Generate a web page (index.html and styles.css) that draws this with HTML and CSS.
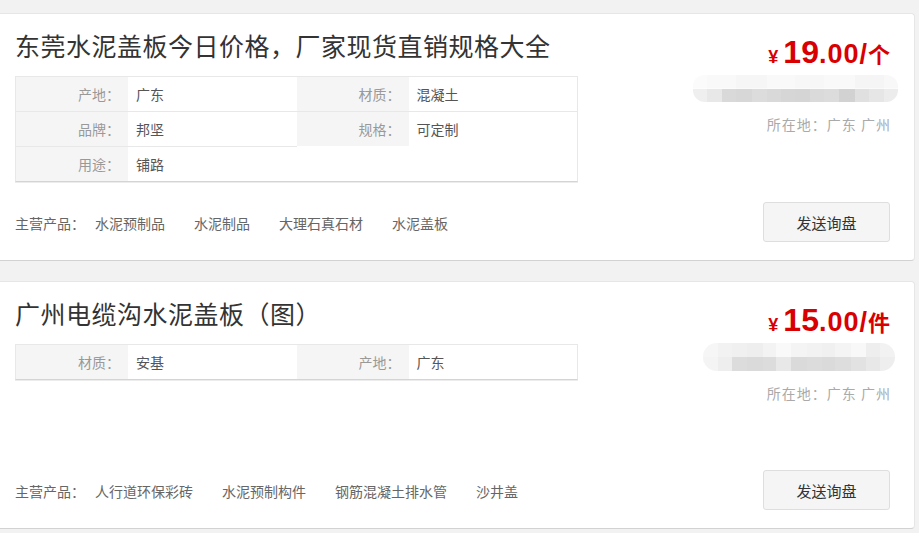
FILE: index.html
```html
<!DOCTYPE html>
<html lang="zh-CN">
<head>
<meta charset="utf-8">
<title>水泥盖板</title>
<link rel="stylesheet" href="styles.css">
</head>
<body>
<div class="list">
  <div class="card">
    <div class="main">
      <h2 class="title">东莞水泥盖板今日价格，厂家现货直销规格大全</h2>
      <ul class="attrs">
        <li><span class="k">产地：</span><span class="v">广东</span></li>
        <li><span class="k">材质：</span><span class="v">混凝土</span></li>
        <li><span class="k">品牌：</span><span class="v">邦坚</span></li>
        <li><span class="k">规格：</span><span class="v">可定制</span></li>
        <li><span class="k">用途：</span><span class="v">铺路</span></li>
      </ul>
      <div class="products"><span class="plabel">主营产品：</span><span class="pitem">水泥预制品</span><span class="pitem">水泥制品</span><span class="pitem">大理石真石材</span><span class="pitem">水泥盖板</span></div>
    </div>
    <div class="side">
      <div class="price"><span class="yen">¥</span><span class="int">19</span><span class="dec">.00/</span><span class="unit">个</span></div>
      <div class="blur blur-a"></div>
      <div class="loc">所在地：广东 广州</div>
      <button class="inquiry">发送询盘</button>
    </div>
  </div>

  <div class="card">
    <div class="main">
      <h2 class="title">广州电缆沟水泥盖板（图）</h2>
      <ul class="attrs">
        <li><span class="k">材质：</span><span class="v">安基</span></li>
        <li><span class="k">产地：</span><span class="v">广东</span></li>
      </ul>
      <div class="products"><span class="plabel">主营产品：</span><span class="pitem">人行道环保彩砖</span><span class="pitem">水泥预制构件</span><span class="pitem">钢筋混凝土排水管</span><span class="pitem">沙井盖</span></div>
    </div>
    <div class="side">
      <div class="price"><span class="yen">¥</span><span class="int">15</span><span class="dec">.00/</span><span class="unit">件</span></div>
      <div class="blur blur-b"></div>
      <div class="loc">所在地：广东 广州</div>
      <button class="inquiry">发送询盘</button>
    </div>
  </div>
</div>
</body>
</html>
```

FILE: styles.css
```css
html, body {
  margin: 0;
  padding: 0;
  background: #f2f2f2;
}
body {
  font-family: "Noto Sans CJK SC", "Liberation Sans", sans-serif;
  font-size: 14px;
  color: #555;
}
.list {
  padding-top: 13px;
  display: flex;
  flex-direction: column;
  gap: 20px;
  width: 915px;
}
.card {
  box-sizing: border-box;
  height: 248px;
  background: #fff;
  border: 1px solid #e6e6e6;
  border-left: 0;
  border-bottom: 1px solid #d2d2d2;
  border-radius: 0 4px 4px 0;
  display: flex;
  padding: 0 24px 0 15px;
}
.main {
  width: 563px;
  display: flex;
  flex-direction: column;
  padding: 13px 0 27px;
}
.title {
  margin: 0;
  font-size: 25px;
  line-height: 36px;
  font-weight: 400;
  color: #333;
  letter-spacing: 0.5px;
}
.attrs {
  list-style: none;
  margin: 13px 0 0;
  padding: 0;
  display: grid;
  grid-template-columns: 1fr 1fr;
  border: 1px solid #e8e8e8;
  border-bottom: 1px solid #d4d4d4;
  box-shadow: 0 1px 0 #ececec;
}
.attrs li {
  display: grid;
  grid-template-columns: 112px 1fr;
  height: 34px;
  line-height: 34px;
}
.attrs li:nth-child(n+3) {
  border-top: 1px solid #e8e8e8;
}
.attrs .k {
  background: #f5f5f5;
  color: #999;
  text-align: right;
  padding-right: 8px;
}
.attrs .v {
  color: #555;
  padding-left: 8px;
}
.products {
  margin-top: auto;
  line-height: 20px;
  color: #666;
  display: flex;
}
.plabel {
  margin-right: 10px;
}
.pitem {
  margin-right: 29px;
}
.side {
  flex: 1;
  display: flex;
  flex-direction: column;
  align-items: flex-end;
  padding: 20px 0 18px;
}
.price {
  color: #d80000;
  font-family: "Liberation Sans", Arial, sans-serif;
  font-weight: 700;
  line-height: 36px;
  height: 36px;
  white-space: nowrap;
}
.price .yen {
  font-size: 18px;
  margin-right: 5px;
}
.price .int {
  font-size: 32px;
}
.price .dec {
  font-size: 27px;
  letter-spacing: 1px;
}
.price .unit {
  font-family: "Noto Sans CJK SC", sans-serif;
  font-size: 22px;
}
.blur {
  margin-top: 5px;
  height: 28px;
  border-radius: 14px;
  background-repeat: no-repeat;
  background-size: 100% 50%, 100% 50%;
  background-position: 0 0, 0 100%;
}
.blur-a {
  width: 205px;
  margin-right: -8px;
  height: 27px;
  border-radius: 12px;
  background-image:
    linear-gradient(to right, #fbfbfb 0 7%, #f9f9f9 7% 21%, #f6f6f6 21% 36%, #f9f9f9 36% 50%, #f7f7f7 50% 64%, #f9f9f9 64% 79%, #f5f5f5 79% 93%, #f8f8f8 93% 100%),
    linear-gradient(to right, #efefef 0 7%, #e8e8e8 7% 14%, #d9d9d9 14% 21%, #d7d7d7 21% 29%, #dcdcdc 29% 36%, #d9d9d9 36% 43%, #d6d6d6 43% 50%, #d5d5d5 50% 57%, #dadada 57% 64%, #dcdcdc 64% 71%, #d2d2d2 71% 79%, #e0e0e0 79% 86%, #e6e6e6 86% 93%, #ececec 93% 100%);
}
.blur-b {
  width: 192px;
  margin-right: -5px;
  background-image:
    linear-gradient(to right, #f6f6f6 0 8%, #f2f2f2 8% 15%, #f0f0f0 15% 23%, #eeeeee 23% 31%, #f3f3f3 31% 38%, #f9f9f9 38% 46%, #f4f4f4 46% 54%, #f2f2f2 54% 62%, #f0f0f0 62% 69%, #f4f4f4 69% 77%, #f8f8f8 77% 85%, #eeeeee 85% 92%, #f2f2f2 92% 100%),
    linear-gradient(to right, #f4f4f4 0 8%, #eeeeee 8% 15%, #dcdcdc 15% 23%, #dadada 23% 31%, #dcdcdc 31% 38%, #e8e8e8 38% 46%, #dadada 46% 54%, #dcdcdc 54% 62%, #dadada 62% 69%, #dddddd 69% 77%, #e2e2e2 77% 85%, #e8e8e8 85% 92%, #eeeeee 92% 100%);
}
.loc {
  margin-top: 12px;
  line-height: 20px;
  color: #aaa;
  white-space: nowrap;
  letter-spacing: 1px;
  margin-right: -1px;
}
.inquiry {
  margin-top: auto;
  width: 127px;
  height: 40px;
  box-sizing: border-box;
  background: #f5f5f5;
  border: 1px solid #dedede;
  border-radius: 3px;
  font-family: "Noto Sans CJK SC", sans-serif;
  font-size: 15px;
  color: #333;
  padding: 0;
}
```
